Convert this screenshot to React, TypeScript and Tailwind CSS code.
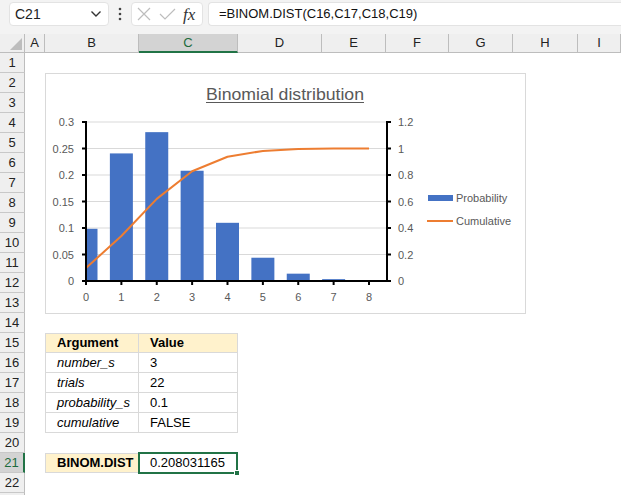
import React from 'react';

const COLS = ['A', 'B', 'C', 'D', 'E', 'F', 'G', 'H', 'I'];
const ROWS = Array.from({ length: 23 }, (_, i) => i + 1);

const probs = [0.098477, 0.240722, 0.280842, 0.208031, 0.109794, 0.043918, 0.013826, 0.003511, 0.000732];
const cumul = [0.098477, 0.339199, 0.620041, 0.828072, 0.937866, 0.981784, 0.99561, 0.999121, 0.999853];

const FONT = '"Liberation Sans", Arial, sans-serif';

function Chart() {
  const X0 = 41;
  const XR = 342;
  const Y0 = 208;
  const H = 159;
  const DX = 35.375;
  const x = (i: number) => X0 + i * DX;
  const yl = (v: number) => Y0 - (v / 0.3) * H;
  const yr = (v: number) => Y0 - (v / 1.2) * H;
  const left = ['0', '0.05', '0.1', '0.15', '0.2', '0.25', '0.3'];
  const right = ['0', '0.2', '0.4', '0.6', '0.8', '1', '1.2'];
  const linePts = cumul.map((c, i) => `${x(i)},${yr(c)}`).join(' ');

  return (
    <svg width={481} height={241} viewBox="0 0 481 241" style={{ fontFamily: FONT }}>
      <rect x={0.5} y={0.5} width={480} height={240} fill="#ffffff" stroke="#d9d9d9" />

      <text x={161} y={26.5} fontSize={16.5} fill="#595959" textLength={158} lengthAdjust="spacingAndGlyphs">
        Binomial distribution
      </text>
      <line x1={161} x2={319} y1={29.5} y2={29.5} stroke="#595959" strokeWidth={1} />

      {left.map((_, k) => {
        const yy = Y0 - (k * H) / 6;
        return k === 0 ? null : (
          <line key={`g${k}`} x1={X0} x2={XR} y1={yy} y2={yy} stroke="#d9d9d9" strokeWidth={1} />
        );
      })}

      {probs.map((p, i) => {
        const cx = x(i);
        const x1 = Math.max(X0, cx - 11.5);
        const x2 = cx + 11.5;
        const top = yl(p);
        return <rect key={`b${i}`} x={x1} y={top} width={x2 - x1} height={Y0 - top} fill="#4472c4" />;
      })}

      <polyline points={linePts} fill="none" stroke="#ed7d31" strokeWidth={2} strokeLinejoin="round" />

      <line x1={X0} x2={X0} y1={Y0 - H - 1} y2={Y0 + 1} stroke="#000" strokeWidth={2} />
      <line x1={XR} x2={XR} y1={Y0 - H - 1} y2={Y0 + 1} stroke="#000" strokeWidth={2} />
      <line x1={X0} x2={XR} y1={Y0} y2={Y0} stroke="#000" strokeWidth={2} />

      {left.map((lab, k) => {
        const yy = Y0 - (k * H) / 6;
        return (
          <g key={`l${k}`}>
            <line x1={X0 - 4} x2={X0} y1={yy} y2={yy} stroke="#000" strokeWidth={2} />
            <text x={29} y={yy} fontSize={11} fill="#595959" textAnchor="end" dominantBaseline="central">
              {lab}
            </text>
          </g>
        );
      })}

      {right.map((lab, k) => {
        const yy = Y0 - (k * H) / 6;
        return (
          <g key={`r${k}`}>
            <line x1={XR} x2={XR + 4} y1={yy} y2={yy} stroke="#000" strokeWidth={2} />
            <text x={353} y={yy} fontSize={11} fill="#595959" dominantBaseline="central">
              {lab}
            </text>
          </g>
        );
      })}

      {probs.map((_, i) => (
        <g key={`x${i}`}>
          <line x1={x(i)} x2={x(i)} y1={Y0} y2={Y0 + 4} stroke="#000" strokeWidth={2} />
          <text x={x(i)} y={224} fontSize={11} fill="#595959" textAnchor="middle" dominantBaseline="central">
            {i}
          </text>
        </g>
      ))}

      <rect x={383} y={122} width={25} height={6} fill="#4472c4" />
      <text x={411} y={125} fontSize={11} fill="#595959" dominantBaseline="central">
        Probability
      </text>
      <line x1={382} x2={408} y1={148} y2={148} stroke="#ed7d31" strokeWidth={2} />
      <text x={411} y={148} fontSize={11} fill="#595959" dominantBaseline="central">
        Cumulative
      </text>
    </svg>
  );
}

type CellDef = { text: string; cls: string };

const cells: Record<string, CellDef> = {
  B15: { text: 'Argument', cls: 'bg-[#fff2cc] font-bold border-t border-l' },
  C15: { text: 'Value', cls: 'bg-[#fff2cc] font-bold border-t' },
  B16: { text: 'number_s', cls: 'italic border-l' },
  C16: { text: '3', cls: '' },
  B17: { text: 'trials', cls: 'italic border-l' },
  C17: { text: '22', cls: '' },
  B18: { text: 'probability_s', cls: 'italic border-l' },
  C18: { text: '0.1', cls: '' },
  B19: { text: 'cumulative', cls: 'italic border-l' },
  C19: { text: 'FALSE', cls: '' },
  B21: { text: 'BINOM.DIST', cls: 'bg-[#fff2cc] font-bold border-t border-l' },
  C21: { text: '0.208031165', cls: 'border-t' },
};

function FormulaBar() {
  return (
    <div className="h-[34px] bg-[#f3f3f3] flex items-start pt-[2px] pl-[9px]">
      <div className="w-[100px] h-[24px] bg-white rounded-[4px] border border-[#e3e3e3] flex items-center justify-between pl-[5px] pr-[6px]">
        <span className="text-[14px] text-[#222]">C21</span>
        <svg width="12" height="8" viewBox="0 0 12 8">
          <path d="M1.5 1.5 L6 6 L10.5 1.5" fill="none" stroke="#333" strokeWidth="1.4" />
        </svg>
      </div>
      <div className="w-[22px] h-[24px] flex items-center justify-center">
        <svg width="4" height="14" viewBox="0 0 4 14">
          <circle cx="2" cy="2" r="1.3" fill="#444" />
          <circle cx="2" cy="7" r="1.3" fill="#444" />
          <circle cx="2" cy="12" r="1.3" fill="#444" />
        </svg>
      </div>
      <div className="w-[72px] h-[24px] bg-white rounded-[4px] border border-[#e3e3e3] flex items-center pl-[5px]">
        <svg width="14" height="14" viewBox="0 0 14 14">
          <path d="M1 1 L13 13 M13 1 L1 13" stroke="#bdbdbd" strokeWidth="1.2" />
        </svg>
        <svg width="17" height="14" viewBox="0 0 17 14" className="ml-[8px]">
          <path d="M1 7 L6 12 L16 2" fill="none" stroke="#bdbdbd" strokeWidth="1.2" />
        </svg>
        <span
          className="ml-[7px] text-[17px] italic text-[#333] leading-none"
          style={{ fontFamily: '"Liberation Serif", "Times New Roman", serif' }}
        >
          fx
        </span>
      </div>
      <div className="flex-1 h-[24px] bg-white rounded-l-[4px] border border-r-0 border-[#e3e3e3] ml-[5px] flex items-center pl-[10px]">
        <span className="text-[13px] text-[#111]">=BINOM.DIST(C16,C17,C18,C19)</span>
      </div>
    </div>
  );
}

export default function App() {
  return (
    <div className="w-[621px] h-[495px] overflow-hidden bg-white" style={{ fontFamily: FONT }}>
      <FormulaBar />
      <div className="relative">
        <div className="grid grid-cols-[25px_20px_94px_99px_84px_64px_63px_64px_65px_1fr] grid-rows-[19px_repeat(23,20px)]">
          <div className="bg-[#efefef] border-r border-b border-[#bdbdbd] relative">
            <svg width="25" height="19" viewBox="0 0 25 19" className="absolute left-0 top-0">
              <polygon points="10,16 22,16 22,4" fill="#bdbdbd" />
            </svg>
          </div>
          {COLS.map((c) =>
            c === 'C' ? (
              <div
                key={c}
                className="bg-[#d3d3d3] border-r border-[#bdbdbd] border-b-2 border-b-[#217346] flex items-center justify-center text-[13px] text-[#1d6b3c]"
              >
                {c}
              </div>
            ) : (
              <div
                key={c}
                className="bg-[#efefef] border-r border-b border-[#bdbdbd] flex items-center justify-center text-[13px] text-[#222]"
              >
                {c}
              </div>
            )
          )}

          {ROWS.map((r) => (
            <React.Fragment key={r}>
              {r === 21 ? (
                <div className="bg-[#d3d3d3] border-b border-[#c8c8c8] border-r-2 border-r-[#217346] flex items-center justify-center text-[13px] text-[#1d6b3c]">
                  {r}
                </div>
              ) : (
                <div className="bg-[#efefef] border-b border-r border-[#c8c8c8] border-r-[#bdbdbd] flex items-center justify-center text-[13px] text-[#222]">
                  {r < 23 ? r : ''}
                </div>
              )}
              {COLS.map((c) => {
                const def = cells[`${c}${r}`];
                if (!def) return <div key={c} />;
                return (
                  <div
                    key={c}
                    className={`relative flex items-center pl-[11px] border-r border-b border-[#d9d9d9] text-[13px] text-black whitespace-nowrap ${def.cls}`}
                  >
                    {def.text}
                    {c === 'C' && r === 21 && (
                      <div className="absolute -left-[1px] -top-[2px] -right-[1px] -bottom-[2px] border-2 border-[#217346]">
                        <div className="absolute -right-[4px] -bottom-[4px] w-[6px] h-[6px] bg-[#217346] border border-white" />
                      </div>
                    )}
                  </div>
                );
              })}
            </React.Fragment>
          ))}
        </div>

        <div className="absolute left-[45px] top-[39px]">
          <Chart />
        </div>
      </div>
    </div>
  );
}
